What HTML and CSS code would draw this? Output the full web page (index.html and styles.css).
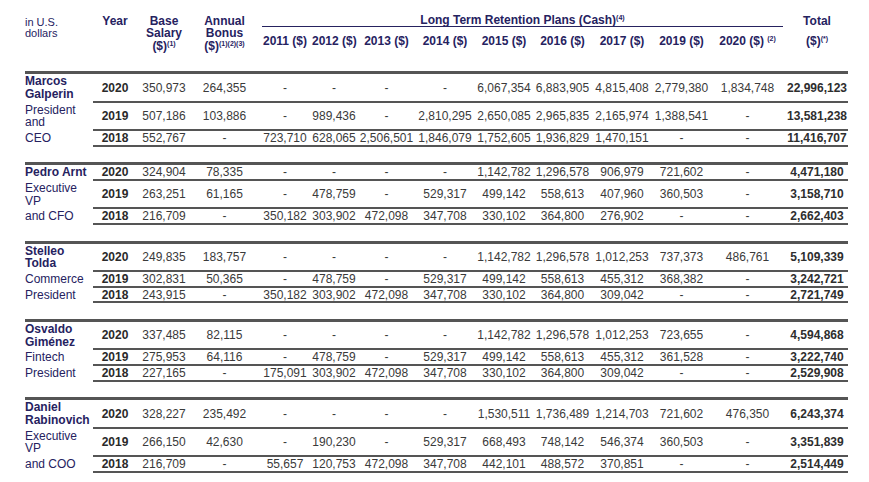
FILE: index.html
```html
<!DOCTYPE html>
<html lang="en">
<head>
<meta charset="utf-8">
<title>Executive Compensation</title>
<link rel="stylesheet" href="styles.css">
</head>
<body>
<table class="comp">
  <colgroup>
    <col class="w-name"><col class="w-year"><col class="w-base"><col class="w-bonus">
    <col class="w-2011"><col class="w-2012"><col class="w-2013"><col class="w-2014">
    <col class="w-2015"><col class="w-2016"><col class="w-2017"><col class="w-2019">
    <col class="w-2020"><col class="w-total">
  </colgroup>
  <thead>
    <tr class="h1">
      <th class="unit" rowspan="2">in U.S.<br>dollars</th>
      <th class="hcol" rowspan="2">Year</th>
      <th class="hcol" rowspan="2">Base<br>Salary<br>($)<sup>(1)</sup></th>
      <th class="hcol" rowspan="2">Annual<br>Bonus<br>($)<sup>(1)(2)(3)</sup></th>
      <th class="group" colspan="9"><div class="grp">Long Term Retention Plans (Cash)<sup>(4)</sup></div></th>
      <th class="hcol">Total</th>
    </tr>
    <tr class="h2">
      <th class="yr">2011 ($)</th>
      <th class="yr">2012 ($)</th>
      <th class="yr">2013 ($)</th>
      <th class="yr">2014 ($)</th>
      <th class="yr">2015 ($)</th>
      <th class="yr">2016 ($)</th>
      <th class="yr">2017 ($)</th>
      <th class="yr">2019 ($)</th>
      <th class="yr">2020 ($) <sup>(2)</sup></th>
      <th class="yr">($)<sup>(*)</sup></th>
    </tr>
  </thead>
  <tbody>
    <tr class="ra">
      <td class="nm"><b>Marcos<br>Galperin</b></td><td class="y">2020</td><td>350,973</td><td>264,355</td>
      <td>-</td><td>-</td><td>-</td><td>-</td><td>6,067,354</td><td>6,883,905</td><td>4,815,408</td><td>2,779,380</td><td>1,834,748</td><td class="t">22,996,123</td>
    </tr>
    <tr class="rb">
      <td class="nm">President<br>and</td><td class="y">2019</td><td>507,186</td><td>103,886</td>
      <td>-</td><td>989,436</td><td>-</td><td>2,810,295</td><td>2,650,085</td><td>2,965,835</td><td>2,165,974</td><td>1,388,541</td><td>-</td><td class="t">13,581,238</td>
    </tr>
    <tr class="rc">
      <td class="nm">CEO</td><td class="y">2018</td><td>552,767</td><td>-</td>
      <td>723,710</td><td>628,065</td><td>2,506,501</td><td>1,846,079</td><td>1,752,605</td><td>1,936,829</td><td>1,470,151</td><td>-</td><td>-</td><td class="t">11,416,707</td>
    </tr>
    <tr class="gap"><td colspan="14"></td></tr>

    <tr class="ra">
      <td class="nm"><b>Pedro Arnt</b></td><td class="y">2020</td><td>324,904</td><td>78,335</td>
      <td>-</td><td>-</td><td>-</td><td>-</td><td>1,142,782</td><td>1,296,578</td><td>906,979</td><td>721,602</td><td>-</td><td class="t">4,471,180</td>
    </tr>
    <tr class="rb">
      <td class="nm">Executive<br>VP</td><td class="y">2019</td><td>263,251</td><td>61,165</td>
      <td>-</td><td>478,759</td><td>-</td><td>529,317</td><td>499,142</td><td>558,613</td><td>407,960</td><td>360,503</td><td>-</td><td class="t">3,158,710</td>
    </tr>
    <tr class="rc">
      <td class="nm">and CFO</td><td class="y">2018</td><td>216,709</td><td>-</td>
      <td>350,182</td><td>303,902</td><td>472,098</td><td>347,708</td><td>330,102</td><td>364,800</td><td>276,902</td><td>-</td><td>-</td><td class="t">2,662,403</td>
    </tr>
    <tr class="gap"><td colspan="14"></td></tr>

    <tr class="ra">
      <td class="nm"><b>Stelleo<br>Tolda</b></td><td class="y">2020</td><td>249,835</td><td>183,757</td>
      <td>-</td><td>-</td><td>-</td><td>-</td><td>1,142,782</td><td>1,296,578</td><td>1,012,253</td><td>737,373</td><td>486,761</td><td class="t">5,109,339</td>
    </tr>
    <tr class="rb">
      <td class="nm">Commerce</td><td class="y">2019</td><td>302,831</td><td>50,365</td>
      <td>-</td><td>478,759</td><td>-</td><td>529,317</td><td>499,142</td><td>558,613</td><td>455,312</td><td>368,382</td><td>-</td><td class="t">3,242,721</td>
    </tr>
    <tr class="rc">
      <td class="nm">President</td><td class="y">2018</td><td>243,915</td><td>-</td>
      <td>350,182</td><td>303,902</td><td>472,098</td><td>347,708</td><td>330,102</td><td>364,800</td><td>309,042</td><td>-</td><td>-</td><td class="t">2,721,749</td>
    </tr>
    <tr class="gap"><td colspan="14"></td></tr>

    <tr class="ra">
      <td class="nm"><b>Osvaldo<br>Giménez</b></td><td class="y">2020</td><td>337,485</td><td>82,115</td>
      <td>-</td><td>-</td><td>-</td><td>-</td><td>1,142,782</td><td>1,296,578</td><td>1,012,253</td><td>723,655</td><td>-</td><td class="t">4,594,868</td>
    </tr>
    <tr class="rb">
      <td class="nm">Fintech</td><td class="y">2019</td><td>275,953</td><td>64,116</td>
      <td>-</td><td>478,759</td><td>-</td><td>529,317</td><td>499,142</td><td>558,613</td><td>455,312</td><td>361,528</td><td>-</td><td class="t">3,222,740</td>
    </tr>
    <tr class="rc">
      <td class="nm">President</td><td class="y">2018</td><td>227,165</td><td>-</td>
      <td>175,091</td><td>303,902</td><td>472,098</td><td>347,708</td><td>330,102</td><td>364,800</td><td>309,042</td><td>-</td><td>-</td><td class="t">2,529,908</td>
    </tr>
    <tr class="gap"><td colspan="14"></td></tr>

    <tr class="ra">
      <td class="nm"><b>Daniel<br>Rabinovich</b></td><td class="y">2020</td><td>328,227</td><td>235,492</td>
      <td>-</td><td>-</td><td>-</td><td>-</td><td>1,530,511</td><td>1,736,489</td><td>1,214,703</td><td>721,602</td><td>476,350</td><td class="t">6,243,374</td>
    </tr>
    <tr class="rb">
      <td class="nm">Executive<br>VP</td><td class="y">2019</td><td>266,150</td><td>42,630</td>
      <td>-</td><td>190,230</td><td>-</td><td>529,317</td><td>668,493</td><td>748,142</td><td>546,374</td><td>360,503</td><td>-</td><td class="t">3,351,839</td>
    </tr>
    <tr class="rc">
      <td class="nm">and COO</td><td class="y">2018</td><td>216,709</td><td>-</td>
      <td>55,657</td><td>120,753</td><td>472,098</td><td>347,708</td><td>442,101</td><td>488,572</td><td>370,851</td><td>-</td><td>-</td><td class="t">2,514,449</td>
    </tr>
  </tbody>
</table>
</body>
</html>
```
FILE: styles.css
```css
html, body {
  margin: 0;
  padding: 0;
  background: #ffffff;
}

body {
  font-family: "Liberation Sans", Arial, Helvetica, sans-serif;
}

.comp {
  margin-left: 25px;
  width: 823px;
  table-layout: fixed;
  border-collapse: separate;
  border-spacing: 0;
  font-size: 12px;
  line-height: 12.7px;
  color: #3a3a3a;
}

.w-name { width: 68px; }
.w-year { width: 44px; }
.w-base { width: 54px; }
.w-bonus { width: 67px; }
.w-2011 { width: 54px; }
.w-2012 { width: 44px; }
.w-2013 { width: 61px; }
.w-2014 { width: 56px; }
.w-2015 { width: 62px; }
.w-2016 { width: 55px; }
.w-2017 { width: 64px; }
.w-2019 { width: 55px; }
.w-2020 { width: 77px; }
.w-total { width: 62px; }

.comp th,
.comp td {
  padding: 0;
  white-space: nowrap;
}

/* ---------- header ---------- */
.comp thead th {
  color: #26225f;
  font-weight: bold;
  text-align: center;
  vertical-align: top;
}

.comp sup {
  font-size: 7px;
  line-height: 0;
  vertical-align: 4px;
}

.h1 th {
  height: 27px;
  box-sizing: border-box;
  padding-top: 14.5px;
}

.comp thead th.unit {
  text-align: left;
  font-weight: normal;
  font-size: 11px;
  line-height: 10.5px;
  padding-top: 17px;
}

.comp thead th.group {
  padding-top: 14px;
  line-height: 12px;
}

.grp {
  margin: 0 3px 0 4px;
  border-bottom: 1px solid #26225f;
}

.h2 th {
  height: 44px;
  box-sizing: border-box;
}

.comp thead th.yr {
  padding-top: 8px;
}

/* ---------- body ---------- */
.comp tbody td {
  text-align: center;
  vertical-align: middle;
  padding-top: 1px;
  border-bottom: 2px solid #555555;
}

.comp tbody td.nm {
  text-align: left;
  vertical-align: top;
  color: #26225f;
  border-bottom-color: transparent;
}

.comp tbody td.y {
  font-weight: bold;
  color: #2a2a2a;
}

.comp tbody td.t {
  font-weight: bold;
  color: #2e2e2e;
}

.ra td {
  border-top: 3px solid #555555;
}

.rc td {
  border-bottom-width: 1px;
}

.comp tbody tr.gap td {
  height: 15.5px;
  padding: 0;
  border: 0;
}
```
